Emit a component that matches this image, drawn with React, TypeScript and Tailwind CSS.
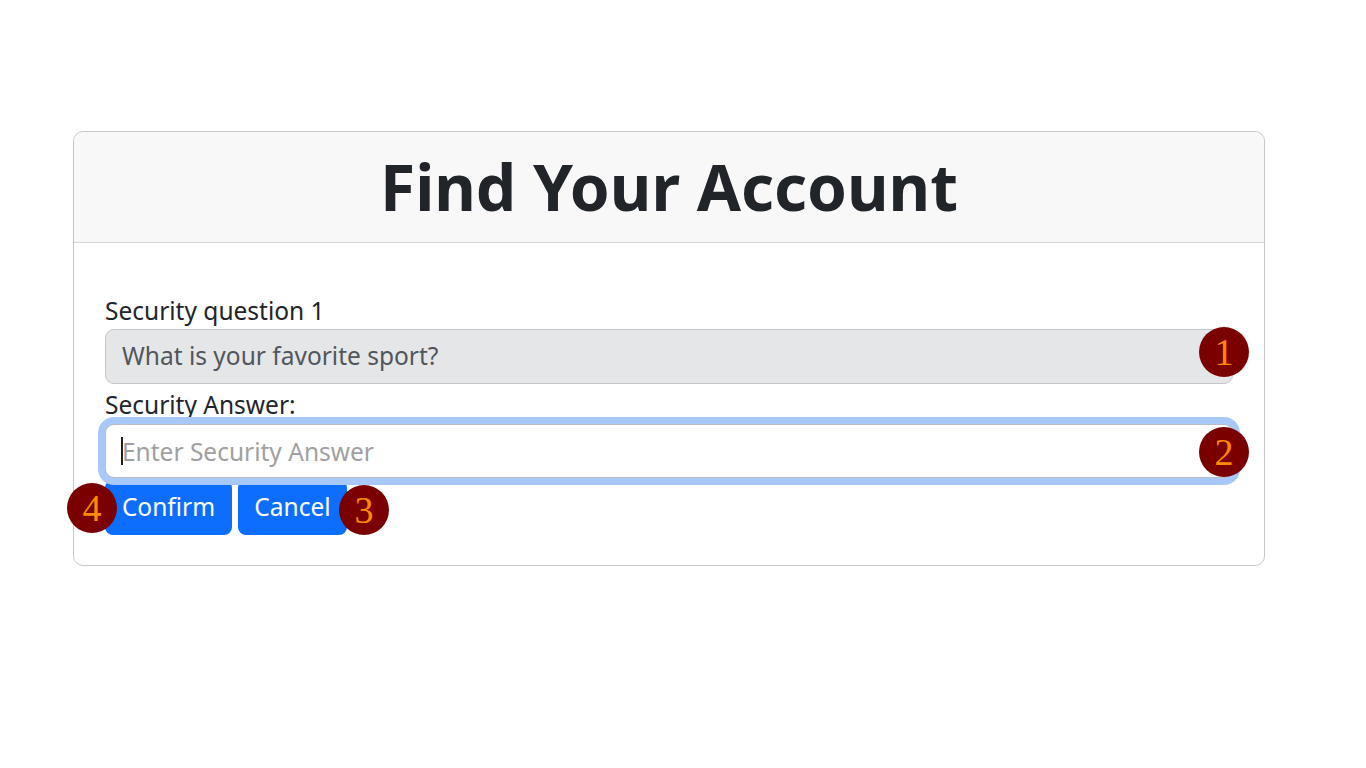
import React from "react";

const Badge = ({ n, className }: { n: string; className: string }) => (
  <div
    className={
      "absolute w-[50px] h-[50px] rounded-full bg-[#7a0000] flex items-center justify-center text-[#ff8a00] text-[38px] leading-none pointer-events-none " +
      className
    }
    style={{ fontFamily: '"Liberation Serif", serif' }}
  >
    {n}
  </div>
);

const App = () => {
  return (
    <div
      className="min-h-screen bg-white pt-[131px] pl-[73px]"
      style={{ fontFamily: '"Noto Sans", "Open Sans", sans-serif' }}
    >
      <div className="relative w-[1192px] border border-[#c8c8c8] rounded-[10px] text-[#212529]">
        <div className="h-[111px] bg-[#f8f8f8] border-b border-[#d5d5d5] rounded-t-[10px] flex items-center justify-center">
          <h1 className="text-[64px] font-bold leading-none">Find Your Account</h1>
        </div>
        <div className="px-[31px] pt-[53px] pb-[30px]">
          <label className="block text-[24.5px] leading-[30px]">Security question 1</label>
          <div className="mt-[3px] h-[55px] w-[1128px] rounded-[9px] border border-[#c3c6ca] bg-[#e5e6e8] px-[16px] flex items-center text-[24.5px] text-[#50565c]">
            What is your favorite sport?
          </div>
          <label className="block mt-[6px] text-[24.5px] leading-[30px]">Security Answer:</label>
          <div className="relative mt-[4px]">
            <input
              placeholder="Enter Security Answer"
              className="block h-[54px] w-[1128px] rounded-[9px] border border-[#b9bcc2] bg-white px-[16px] text-[24.5px] text-[#212529] placeholder:text-[#a0a0a0] outline-none shadow-[0_0_0_7px_#a8c8fa]"
            />
            <span className="absolute left-[16px] top-[13px] h-[28px] w-[2px] bg-[#222]" />
          </div>
          <div className="mt-[2px] flex gap-[6px]">
            <button className="h-[55px] w-[127px] rounded-[8px] bg-[#0d6efd] text-white text-[24.5px]">
              Confirm
            </button>
            <button className="h-[55px] w-[109px] rounded-[8px] bg-[#0d6efd] text-white text-[24.5px]">
              Cancel
            </button>
          </div>
        </div>
        <Badge n="1" className="left-[1125px] top-[195px]" />
        <Badge n="2" className="left-[1125px] top-[295px]" />
        <Badge n="3" className="left-[265px] top-[353px]" />
        <Badge n="4" className="left-[-7px] top-[351px]" />
      </div>
    </div>
  );
};

export default App;
